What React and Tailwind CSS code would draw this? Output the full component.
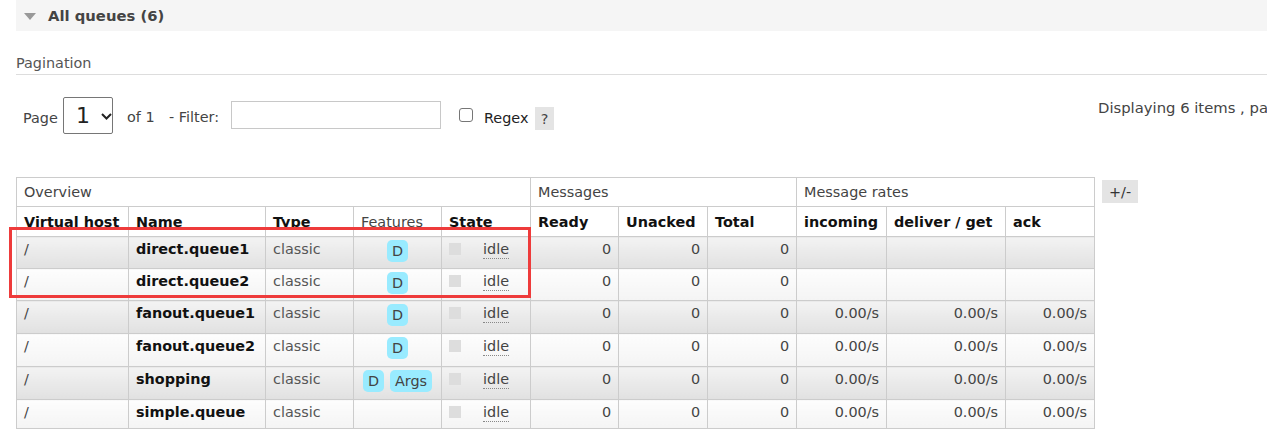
import React from "react";

const rows = [
  { name: "direct.queue1", feats: ["D"], rates: false, h: "h-[32px]" },
  { name: "direct.queue2", feats: ["D"], rates: false, h: "h-[32px]" },
  { name: "fanout.queue1", feats: ["D"], rates: true, h: "h-[33px]" },
  { name: "fanout.queue2", feats: ["D"], rates: true, h: "h-[33px]" },
  { name: "shopping", feats: ["D", "Args"], rates: true, h: "h-[33px]" },
  { name: "simple.queue", feats: [], rates: true, h: "h-[29px]" },
];

function Badge({ children }) {
  return (
    <span className="inline-block rounded-[5px] bg-[#99ebff] px-[5px] leading-[22px] text-[#444]">
      {children}
    </span>
  );
}

export default function App() {
  const font = { fontFamily: '"DejaVu Sans", Verdana, sans-serif' };
  return (
    <div
      className="relative h-[441px] w-[1267px] overflow-hidden bg-white text-[14.4px] leading-[18px] text-[#444]"
      style={font}
    >
      <div className="w-[1400px]">
        {/* Section header */}
        <div className="ml-4 flex h-[31px] items-center bg-[#f5f5f5] pl-2">
          <svg width="12" height="7" viewBox="0 0 12 7" className="mt-[1px]">
            <polygon points="0,0 12,0 6,7" fill="#999" />
          </svg>
          <span className="ml-[12px] text-[14.8px] font-bold text-[#444]">All queues (6)</span>
        </div>

        {/* Pagination label */}
        <div className="ml-4 mt-[23px] border-b border-[#ddd] pb-[2px] text-[#555]">
          Pagination
        </div>

        {/* Pagination row */}
        <div className="mt-[22px] flex items-start">
          <span className="ml-[23px] mt-[12px] w-[40px]">Page</span>
          <div className="flex h-[37px] w-[50px] items-center rounded-[2px] border border-[#767676] bg-white pl-[12px]">
            <span className="text-[22px] leading-[24px] text-[#222]">1</span>
            <svg width="11" height="7" viewBox="0 0 11 7" className="ml-[11px] mt-[2px]">
              <polyline points="1,1 5.5,5.5 10,1" fill="none" stroke="#222" strokeWidth="2" />
            </svg>
          </div>
          <span className="ml-[14px] mt-[11px] w-[42px]">of 1</span>
          <span className="mt-[11px] w-[62px]">- Filter:</span>
          <div className="mt-[4px] h-[28px] w-[210px] border border-[#c8c8c8] bg-white" />
          <div className="ml-[18px] mt-[11px] h-[14px] w-[14px] rounded-[3px] border border-[#767676] bg-white" />
          <span className="ml-[11px] mt-[12px] w-[51px] text-[#222]">Regex</span>
          <span className="mt-[10px] flex h-[23px] w-[19px] items-center justify-center bg-[#e4e4e4] text-[#444]">
            ?
          </span>
          <span className="ml-[544px] mt-[2px] whitespace-nowrap text-[14.8px] text-[#444]">
            Displaying 6 items , page 1 of 1
          </span>
        </div>

        {/* Table + button */}
        <div className="ml-4 mt-[43px] flex items-start">
          <table className="w-[1079px] table-fixed border-collapse border border-[#ccc]">
            <colgroup>
              <col className="w-[112px]" />
              <col className="w-[137px]" />
              <col className="w-[88px]" />
              <col className="w-[88px]" />
              <col className="w-[89px]" />
              <col className="w-[88px]" />
              <col className="w-[89px]" />
              <col className="w-[89px]" />
              <col className="w-[90px]" />
              <col className="w-[119px]" />
              <col className="w-[89px]" />
            </colgroup>
            <thead>
              <tr className="h-[29px]">
                <th colSpan={5} className="border border-[#ccc] px-[7px] text-left font-normal text-[#444]">
                  Overview
                </th>
                <th colSpan={3} className="border border-[#ccc] px-[7px] text-left font-normal text-[#444]">
                  Messages
                </th>
                <th colSpan={3} className="border border-[#ccc] px-[7px] text-left font-normal text-[#444]">
                  Message rates
                </th>
              </tr>
              <tr className="h-[30px]">
                <th className="whitespace-nowrap border border-[#ccc] px-[7px] text-left font-bold text-[#111]">Virtual host</th>
                <th className="border border-[#ccc] px-[7px] text-left font-bold text-[#111]">Name</th>
                <th className="border border-[#ccc] px-[7px] text-left font-bold text-[#111]">Type</th>
                <th className="border border-[#ccc] px-[7px] text-left font-normal text-[#444]">Features</th>
                <th className="border border-[#ccc] px-[7px] text-left font-bold text-[#111]">State</th>
                <th className="border border-[#ccc] px-[7px] text-left font-bold text-[#111]">Ready</th>
                <th className="border border-[#ccc] px-[7px] text-left font-bold text-[#111]">Unacked</th>
                <th className="border border-[#ccc] px-[7px] text-left font-bold text-[#111]">Total</th>
                <th className="border border-[#ccc] px-[7px] text-left font-bold text-[#111]">incoming</th>
                <th className="whitespace-nowrap border border-[#ccc] px-[7px] text-left font-bold text-[#111]">deliver / get</th>
                <th className="border border-[#ccc] px-[7px] text-left font-bold text-[#111]">ack</th>
              </tr>
            </thead>
            <tbody>
              {rows.map((r, i) => {
                const bg =
                  i % 2 === 0
                    ? "bg-linear-to-b from-[#f3f3f3] to-[#e1e1e1]"
                    : "bg-linear-to-b from-[#fdfdfd] to-[#f4f4f4]";
                const td = `border border-[#ccc] px-[7px] pt-[3px] align-top ${bg}`;
                return (
                  <tr key={r.name} className={r.h}>
                    <td className={`${td} text-[#444]`}>/</td>
                    <td className={`${td} font-bold text-[#111]`}>{r.name}</td>
                    <td className={`${td} text-[#555]`}>classic</td>
                    <td className={`${td} text-center`}>
                      <span className="inline-flex gap-[6px]">
                        {r.feats.map((f) => (
                          <Badge key={f}>{f}</Badge>
                        ))}
                      </span>
                    </td>
                    <td className={td}>
                      <div className="flex items-start">
                        <span className="mt-[3px] h-[12px] w-[12px] bg-[#dddddd]" />
                        <span className="ml-[22px] border-b border-dotted border-[#888] leading-[18px] text-[#444]">
                          idle
                        </span>
                      </div>
                    </td>
                    <td className={`${td} text-right`}>0</td>
                    <td className={`${td} text-right`}>0</td>
                    <td className={`${td} text-right`}>0</td>
                    <td className={`${td} text-right`}>{r.rates ? "0.00/s" : ""}</td>
                    <td className={`${td} text-right`}>{r.rates ? "0.00/s" : ""}</td>
                    <td className={`${td} text-right`}>{r.rates ? "0.00/s" : ""}</td>
                  </tr>
                );
              })}
            </tbody>
          </table>
          <span className="ml-[7px] mt-[3px] flex h-[23px] w-[36px] items-center justify-center bg-[#e4e4e4] text-[#333]">
            +/-
          </span>
        </div>
      </div>

      {/* Annotation box */}
      <div className="absolute left-[9px] top-[227px] h-[71px] w-[522px] border-[3px] border-[#ee3b3b]" />
    </div>
  );
}
